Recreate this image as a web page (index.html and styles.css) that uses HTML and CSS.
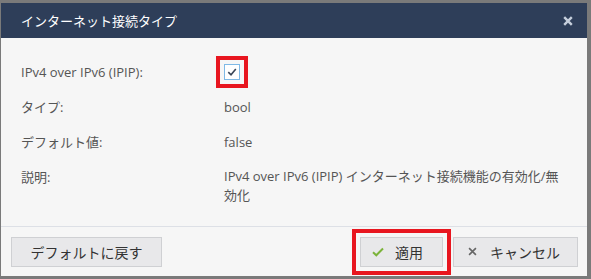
FILE: index.html
```html
<!DOCTYPE html>
<html lang="ja">
<head>
    <meta charset="UTF-8">
    <title>インターネット接続タイプ</title>
    <link rel="stylesheet" href="styles.css">
</head>
<body>
    <div class="dialog">
        <div class="dialog-header">
            <span class="dialog-title">インターネット接続タイプ</span>
            <svg class="dialog-close" width="10" height="10" viewBox="0 0 10 10"><path d="M1.2 1.2 L8.8 8.8 M8.8 1.2 L1.2 8.8" stroke="#c6cfdc" stroke-width="2.4"/></svg>
        </div>
        <div class="dialog-body">
            <div class="field-label">IPv4 over IPv6 (IPIP):</div>
            <div class="field-value">
                <span class="check-box marked">
                    <svg width="12" height="12" viewBox="0 0 12 12"><path d="M2.3 6.2 L5 8.8 L9.8 3" fill="none" stroke="#3a4658" stroke-width="1.6"/></svg>
                </span>
            </div>

            <div class="field-label">タイプ:</div>
            <div class="field-value">bool</div>

            <div class="field-label">デフォルト値:</div>
            <div class="field-value">false</div>

            <div class="field-label">説明:</div>
            <div class="field-value desc">IPv4 over IPv6 (IPIP) インターネット接続機能の有効化/無効化</div>
        </div>
        <div class="dialog-footer">
            <button class="btn btn-reset">デフォルトに戻す</button>
            <div class="footer-right">
                <button class="btn btn-apply marked">
                    <svg width="12" height="10" viewBox="0 0 12 10"><path d="M1 5.2 L4.3 8.3 L11 1.5" fill="none" stroke="#7bb33a" stroke-width="2"/></svg>
                    適用
                </button>
                <button class="btn btn-cancel">
                    <svg width="9" height="9" viewBox="0 0 10 10"><path d="M1.2 1.2 L8.8 8.8 M8.8 1.2 L1.2 8.8" stroke="#666" stroke-width="1.8"/></svg>
                    キャンセル
                </button>
            </div>
        </div>
    </div>
</body>
</html>
```

FILE: styles.css
```css
* {
    box-sizing: border-box;
}
body {
    margin: 0;
    background-color: #7a7a7a;
    font-family: "Open Sans", "Noto Sans CJK JP", sans-serif;
}
.dialog {
    margin: 3px 0 0 1px;
    width: 586px;
    height: 273px;
    background-color: #f6f6f6;
    display: flex;
    flex-direction: column;
}
.dialog-header {
    height: 35px;
    flex-shrink: 0;
    background-color: #2e3e59;
    display: flex;
    align-items: center;
    justify-content: space-between;
    padding: 0 14px 0 20px;
}
.dialog-title {
    color: #fff;
    font-size: 13px;
}
.dialog-body {
    flex: 1;
    display: grid;
    grid-template-columns: 203px 343px;
    grid-auto-rows: minmax(20px, auto);
    row-gap: 15px;
    padding: 24px 20px 0 20px;
    font-size: 13px;
    color: #555;
    line-height: 20px;
    align-content: start;
}
.field-value {
    display: flex;
    align-items: center;
}
.field-value.desc {
    display: block;
    line-height: 19px;
}
.check-box {
    width: 16px;
    height: 16px;
    border: 1px solid #7fb9e6;
    background-color: #fff;
    display: flex;
    align-items: center;
    justify-content: center;
}
.marked {
    outline: 4px solid #e8161f;
    outline-offset: 4px;
}
.dialog-footer {
    border-top: 1px solid #dde0e6;
    height: 50px;
    flex-shrink: 0;
    display: flex;
    align-items: center;
    justify-content: space-between;
    padding: 0 9px 0 10px;
}
.footer-right {
    display: flex;
    gap: 10px;
}
.btn {
    height: 30px;
    background-color: #e8e8ea;
    border: 1px solid #cfd0d3;
    color: #333;
    font-family: "Open Sans", "Noto Sans CJK JP", sans-serif;
    font-size: 14px;
    white-space: nowrap;
    display: flex;
    align-items: center;
}
.btn-reset {
    width: 151px;
    justify-content: center;
}
.btn-apply {
    width: 83px;
    padding: 0 0 0 11px;
    gap: 11px;
}
.btn-cancel {
    width: 125px;
    padding: 0 0 0 14px;
    gap: 13px;
}
```
